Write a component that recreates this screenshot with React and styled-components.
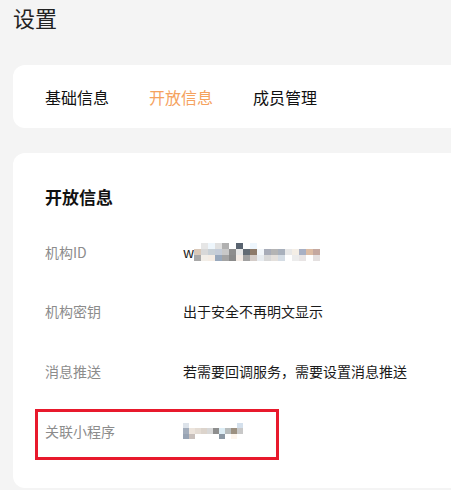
import React from "react";
import styled, { createGlobalStyle } from "styled-components";

const GlobalStyle = createGlobalStyle`
  html, body {
    margin: 0;
    padding: 0;
    background: #f4f4f4;
    overflow: hidden;
  }
  body {
    font-family: "Noto Sans CJK SC", "Noto Sans", sans-serif;
    color: #222;
  }
`;

const tabs = ["基础信息", "开放信息", "成员管理"];

const rows = [
  { label: "机构ID", value: "id" },
  { label: "机构密钥", value: "出于安全不再明文显示" },
  { label: "消息推送", value: "若需要回调服务，需要设置消息推送" },
  { label: "关联小程序", value: "mini", marked: true },
];

function IdMosaic() {
  const top = ["#fff", "#e6e6e6", "#eef6fc", "#e0e0e0", "#b0b0b0", "#fff", "#5a6470", "#fff", "#eef6fd", "#fff", "#fff", "#fff", "#fff", "#fff", "#fff", "#fff", "#fff", "#fff", "#fff", "#fff"];
  const mid = ["#d9c8b8", "#d8d8d8", "#c8d0d6", "#c4ccd8", "#c8c8c8", "#8e8e8e", "#e8e8e8", "#626b74", "#8d7a6a", "#f2f6fa", "#a8acb8", "#b4b4b4", "#a8b0bc", "#e8e8e8", "#f4eee6", "#a8b0c4", "#dcbca4", "#c4a8a0"];
  const bot = ["#a8a8a8", "#f2eee8", "#f4ece4", "#98a8bc", "#a4a4a4", "#8a8a8a", "#f4ece6", "#a0a0a0", "#d4ccc8", "#e8ecf0", "#d8d8d8", "#e4e0dc", "#d4dce4", "#fff", "#ececec", "#e8e4e4", "#fff", "#e4e0e0"];
  return (
    <svg width="128" height="18" viewBox="0 0 128 18">
      {top.map((c, i) => (
        <rect key={"t" + i} x={i * 7} y="0" width="7" height="6" fill={c} />
      ))}
      {mid.map((c, i) => (
        <rect key={"m" + i} x={i * 7} y="6" width="7" height="6" fill={c} />
      ))}
      {bot.map((c, i) => (
        <rect key={"b" + i} x={i * 7} y="12" width="7" height="6" fill={c} />
      ))}
    </svg>
  );
}

function MiniMosaic() {
  const mid = ["#a4aebc", "#ece4dc", "#e4dcd4", "#dcd4cc", "#d8d8d8", "#8e8e8e", "#dcecf4", "#b8bcbc", "#9c9080", "#c8c8c8"];
  const bot = ["#98a4b4", "#c8c0bc", "#fff", "#fff", "#fff", "#fff", "#8c98a4", "#fff", "#fcf4ec", "#fff"];
  return (
    <svg width="62" height="16" viewBox="0 0 62 16">
      <rect x="0" y="0" width="6" height="5" fill="#dde3ea" />
      <rect x="54" y="0" width="6" height="5" fill="#d4e0ec" />
      {mid.map((c, i) => (
        <rect key={"m" + i} x={i * 6} y="5" width="6" height="6" fill={c} />
      ))}
      {bot.map((c, i) => (
        <rect key={"b" + i} x={i * 6} y="11" width="6" height="5" fill={c} />
      ))}
    </svg>
  );
}

function Value({ kind }) {
  if (kind === "id") {
    return (
      <ValueText>
        w<IdMosaic />
      </ValueText>
    );
  }
  if (kind === "mini") {
    return (
      <ValueText>
        <MiniMosaic />
      </ValueText>
    );
  }
  return <ValueText>{kind}</ValueText>;
}

export default function App() {
  return (
    <Page>
      <GlobalStyle />
      <Title>设置</Title>
      <TabCard>
        {tabs.map((t) => (
          <Tab key={t} active={t === "开放信息"}>
            {t}
          </Tab>
        ))}
      </TabCard>
      <InfoCard>
        <Heading>开放信息</Heading>
        {rows.map((r) => (
          <Row key={r.label}>
            <Label>{r.label}</Label>
            <Value kind={r.value} />
            {r.marked && <Marker />}
          </Row>
        ))}
      </InfoCard>
    </Page>
  );
}

const Page = styled.div`
  padding: 0 0 0 13px;
  display: flex;
  flex-direction: column;
  width: 451px;
  box-sizing: border-box;
  overflow: hidden;
`;

const Title = styled.h1`
  margin: 0;
  padding-top: 3px;
  height: 62px;
  font-size: 22px;
  font-weight: 400;
  line-height: 28px;
  color: #222;
`;

const TabCard = styled.nav`
  display: flex;
  align-items: center;
  gap: 40px;
  height: 63px;
  padding: 0 32px;
  margin-right: -30px;
  background: #fff;
  border-radius: 12px;
`;

const Tab = styled.span`
  font-size: 16px;
  line-height: 24px;
  color: ${(p) => (p.active ? "#f5a25e" : "#111")};
`;

const InfoCard = styled.section`
  margin-top: 25px;
  margin-right: -30px;
  padding: 32px 32px 24px;
  background: #fff;
  border-radius: 12px;
  height: 335px;
  box-sizing: border-box;
`;

const Heading = styled.h2`
  margin: 0 0 13px;
  font-size: 17px;
  line-height: 24px;
  font-weight: 700;
  color: #111;
`;

const Row = styled.div`
  position: relative;
  display: flex;
  align-items: center;
  height: 59.6px;
  font-size: 14px;
`;

const Label = styled.span`
  width: 138px;
  flex-shrink: 0;
  color: #8c8c8c;
`;

const ValueText = styled.span`
  display: flex;
  align-items: center;
  color: #1a1a1a;
  svg {
    display: block;
  }
`;

const Marker = styled.div`
  position: absolute;
  left: -10px;
  top: 8px;
  width: 244px;
  height: 51px;
  box-sizing: border-box;
  border: 3px solid #e8192c;
`;
